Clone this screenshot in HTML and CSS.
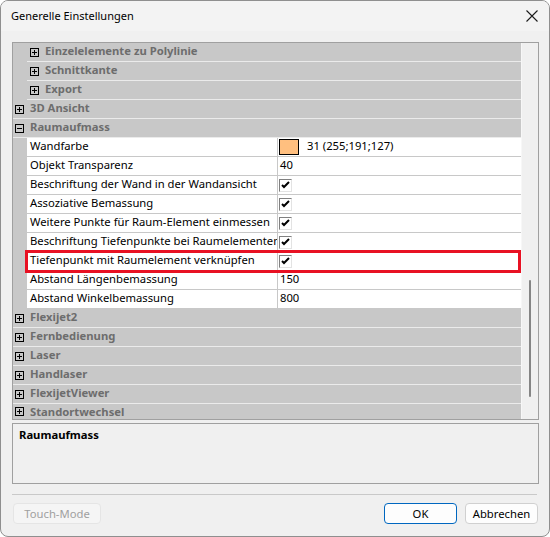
FILE: index.html
```html
<!DOCTYPE html>
<html lang="de">
<head>
  <meta charset="UTF-8">
  <title>Generelle Einstellungen</title>
  <link rel="stylesheet" href="styles.css">
</head>
<body>
  <div class="window">
    <div class="titlebar">
      <span class="title">Generelle Einstellungen</span>
      <svg class="close" width="12" height="12" viewBox="0 0 12 12">
        <path d="M0.5 0.5 L11.5 11.5 M11.5 0.5 L0.5 11.5" stroke="#1b1b1b" stroke-width="1.1" fill="none"/>
      </svg>
    </div>

    <div class="content">
      <div class="grid">
        <div class="rows">
          <div class="row cat">
            <div class="gutter"></div>
            <div class="cell"><svg class="box" viewBox="0 0 9 9"><rect x="0.5" y="0.5" width="8" height="8" fill="none" stroke="#000"/><path d="M2 4.5 H7 M4.5 2 V7" stroke="#000"/></svg>Einzelelemente zu Polylinie</div>
          </div>
          <div class="row cat">
            <div class="gutter"></div>
            <div class="cell"><svg class="box" viewBox="0 0 9 9"><rect x="0.5" y="0.5" width="8" height="8" fill="none" stroke="#000"/><path d="M2 4.5 H7 M4.5 2 V7" stroke="#000"/></svg>Schnittkante</div>
          </div>
          <div class="row cat">
            <div class="gutter"></div>
            <div class="cell"><svg class="box" viewBox="0 0 9 9"><rect x="0.5" y="0.5" width="8" height="8" fill="none" stroke="#000"/><path d="M2 4.5 H7 M4.5 2 V7" stroke="#000"/></svg>Export</div>
          </div>
          <div class="row cat top">
            <div class="gutter"><svg class="box" viewBox="0 0 9 9"><rect x="0.5" y="0.5" width="8" height="8" fill="none" stroke="#000"/><path d="M2 4.5 H7 M4.5 2 V7" stroke="#000"/></svg></div>
            <div class="cell">3D Ansicht</div>
          </div>
          <div class="row cat top">
            <div class="gutter"><svg class="box" viewBox="0 0 9 9"><rect x="0.5" y="0.5" width="8" height="8" fill="none" stroke="#000"/><path d="M2 4.5 H7" stroke="#000"/></svg></div>
            <div class="cell">Raumaufmass</div>
          </div>

          <div class="row prop">
            <div class="gutter"></div>
            <div class="name">Wandfarbe</div>
            <div class="value"><span class="swatch"></span>31 (255;191;127)</div>
          </div>
          <div class="row prop">
            <div class="gutter"></div>
            <div class="name">Objekt Transparenz</div>
            <div class="value">40</div>
          </div>
          <div class="row prop">
            <div class="gutter"></div>
            <div class="name">Beschriftung der Wand in der Wandansicht</div>
            <div class="value"><span class="check"></span></div>
          </div>
          <div class="row prop">
            <div class="gutter"></div>
            <div class="name">Assoziative Bemassung</div>
            <div class="value"><span class="check"></span></div>
          </div>
          <div class="row prop">
            <div class="gutter"></div>
            <div class="name">Weitere Punkte für Raum-Element einmessen</div>
            <div class="value"><span class="check"></span></div>
          </div>
          <div class="row prop">
            <div class="gutter"></div>
            <div class="name">Beschriftung Tiefenpunkte bei Raumelementen</div>
            <div class="value"><span class="check"></span></div>
          </div>
          <div class="row prop">
            <div class="gutter"></div>
            <div class="name">Tiefenpunkt mit Raumelement verknüpfen</div>
            <div class="value"><span class="check"></span></div>
          </div>
          <div class="row prop">
            <div class="gutter"></div>
            <div class="name">Abstand Längenbemassung</div>
            <div class="value">150</div>
          </div>
          <div class="row prop">
            <div class="gutter"></div>
            <div class="name">Abstand Winkelbemassung</div>
            <div class="value">800</div>
          </div>

          <div class="row cat top">
            <div class="gutter"><svg class="box" viewBox="0 0 9 9"><rect x="0.5" y="0.5" width="8" height="8" fill="none" stroke="#000"/><path d="M2 4.5 H7 M4.5 2 V7" stroke="#000"/></svg></div>
            <div class="cell">Flexijet2</div>
          </div>
          <div class="row cat top">
            <div class="gutter"><svg class="box" viewBox="0 0 9 9"><rect x="0.5" y="0.5" width="8" height="8" fill="none" stroke="#000"/><path d="M2 4.5 H7 M4.5 2 V7" stroke="#000"/></svg></div>
            <div class="cell">Fernbedienung</div>
          </div>
          <div class="row cat top">
            <div class="gutter"><svg class="box" viewBox="0 0 9 9"><rect x="0.5" y="0.5" width="8" height="8" fill="none" stroke="#000"/><path d="M2 4.5 H7 M4.5 2 V7" stroke="#000"/></svg></div>
            <div class="cell">Laser</div>
          </div>
          <div class="row cat top">
            <div class="gutter"><svg class="box" viewBox="0 0 9 9"><rect x="0.5" y="0.5" width="8" height="8" fill="none" stroke="#000"/><path d="M2 4.5 H7 M4.5 2 V7" stroke="#000"/></svg></div>
            <div class="cell">Handlaser</div>
          </div>
          <div class="row cat top">
            <div class="gutter"><svg class="box" viewBox="0 0 9 9"><rect x="0.5" y="0.5" width="8" height="8" fill="none" stroke="#000"/><path d="M2 4.5 H7 M4.5 2 V7" stroke="#000"/></svg></div>
            <div class="cell">FlexijetViewer</div>
          </div>
          <div class="row cat top last">
            <div class="gutter"><svg class="box" viewBox="0 0 9 9"><rect x="0.5" y="0.5" width="8" height="8" fill="none" stroke="#000"/><path d="M2 4.5 H7 M4.5 2 V7" stroke="#000"/></svg></div>
            <div class="cell">Standortwechsel</div>
          </div>

          <!-- markierte Zeile -->
          <div class="highlight"></div>
        </div>
        <div class="scroll"><div class="thumb"></div></div>
      </div>

      <div class="description">Raumaufmass</div>

      <div class="separator"></div>

      <div class="buttons">
        <button class="btn disabled">Touch-Mode</button>
        <div class="spacer"></div>
        <button class="btn default">OK</button>
        <button class="btn">Abbrechen</button>
      </div>
    </div>
  </div>
</body>
</html>
```

FILE: styles.css
```css
body {
  margin: 0;
  background: #fff;
  font-family: "Segoe UI", "Noto Sans", "Open Sans", sans-serif;
  font-size: 11.25px;
  color: #000;
}

.window {
  width: 550px;
  height: 537px;
  box-sizing: border-box;
  border: 1px solid #8f8f8f;
  border-radius: 8px;
  background: #f0f0f0;
  overflow: hidden;
}

.titlebar {
  height: 30px;
  box-sizing: border-box;
  padding: 0 11px 2px 10px;
  background: #f3f3f3;
  display: flex;
  align-items: center;
}

.title {
  flex: 1;
  font-size: 11px;
}

.close {
  display: block;
  margin-top: 2px;
}

.content {
  padding: 11px 10px 0 11px;
}

/* Eigenschaften-Tabelle */
.grid {
  display: flex;
  height: 378px;
  box-sizing: border-box;
  border: 1px solid #a0a0a0;
  background: #f0f0f0;
}

.rows {
  position: relative;
  width: 508px;
  overflow: hidden;
  background: #c8c8c8;
}

.row {
  display: flex;
  height: 19px;
  box-sizing: border-box;
  line-height: 16px;
}

.row.last {
  height: 16px;
  overflow: hidden;
}

.gutter {
  width: 14px;
  flex: none;
  background: #c8c8c8;
  display: flex;
  align-items: center;
}

.cell {
  flex: 1;
  display: flex;
  align-items: flex-start;
  white-space: nowrap;
}

.box {
  width: 9px;
  height: 9px;
  flex: none;
  display: block;
  align-self: center;
}

.cat {
  font-weight: bold;
  color: #6d6d6d;
}

.cat .cell {
  border-bottom: 1px solid #ebebeb;
  padding-left: 3px;
}

.cat .cell .box {
  margin-right: 6px;
}

.cat.top {
  border-bottom: 1px solid #ebebeb;
}

.cat.top .cell {
  border-bottom: none;
  padding-left: 3px;
}

.cat.top .gutter {
  padding-left: 2px;
  box-sizing: border-box;
}

.prop .name {
  width: 251px;
  flex: none;
  box-sizing: border-box;
  padding-left: 3px;
  background: #fff;
  border-right: 1px solid #c8c8c8;
  border-bottom: 1px solid #c8c8c8;
  white-space: nowrap;
  overflow: hidden;
}

.prop .value {
  flex: 1;
  display: flex;
  align-items: flex-start;
  padding-left: 2px;
  background: #fff;
  border-bottom: 1px solid #c8c8c8;
}

.swatch {
  width: 18px;
  height: 14px;
  margin-left: -1px;
  margin-top: 1px;
  margin-right: 8px;
  border: 1px solid #000;
  background: #ffbf7f;
}

.check {
  width: 13px;
  height: 13px;
  margin-left: -1px;
  margin-top: 3px;
  box-sizing: border-box;
  border: 1px solid;
  border-color: #808080 #e3e3e3 #e3e3e3 #808080;
  background: #fff url("data:image/svg+xml,%3Csvg xmlns='http://www.w3.org/2000/svg' width='11' height='11'%3E%3Cpath d='M2 5 L4 7 L9 2' stroke='%23000' stroke-width='2' fill='none'/%3E%3C/svg%3E") no-repeat center;
}

.highlight {
  position: absolute;
  left: 12px;
  top: 207px;
  width: 496px;
  height: 23px;
  box-sizing: border-box;
  border: 3px solid #e81123;
}

.scroll {
  width: 16px;
  border-left: 1px solid #f7f7f7;
  background: #f0f0f0;
  position: relative;
}

.thumb {
  position: absolute;
  left: 7px;
  top: 237px;
  width: 2px;
  height: 117px;
  border-radius: 1px;
  background: #858585;
}

/* Beschreibung */
.description {
  margin-top: 3px;
  height: 61px;
  box-sizing: border-box;
  border: 1px solid #a0a0a0;
  padding: 3px 6px;
  font-weight: bold;
}

.separator {
  margin-top: 10px;
  margin-right: 2px;
  height: 1px;
  background: #c9c9c9;
}

.buttons {
  display: flex;
  margin-top: 8px;
  margin-right: 1px;
  gap: 8px;
}

.spacer {
  flex: 1;
}

.btn {
  font: inherit;
  height: 21px;
  width: 73px;
  padding: 0;
  border: 1px solid #d0d0d0;
  border-radius: 4px;
  background: #fdfdfd;
  color: #000;
}

.btn.default {
  border-color: #0067c0;
}

.btn.disabled {
  width: 88px;
  margin-left: 1px;
  color: #a0a0a0;
  background: #f5f5f5;
  border-color: #e5e5e5;
}
```
